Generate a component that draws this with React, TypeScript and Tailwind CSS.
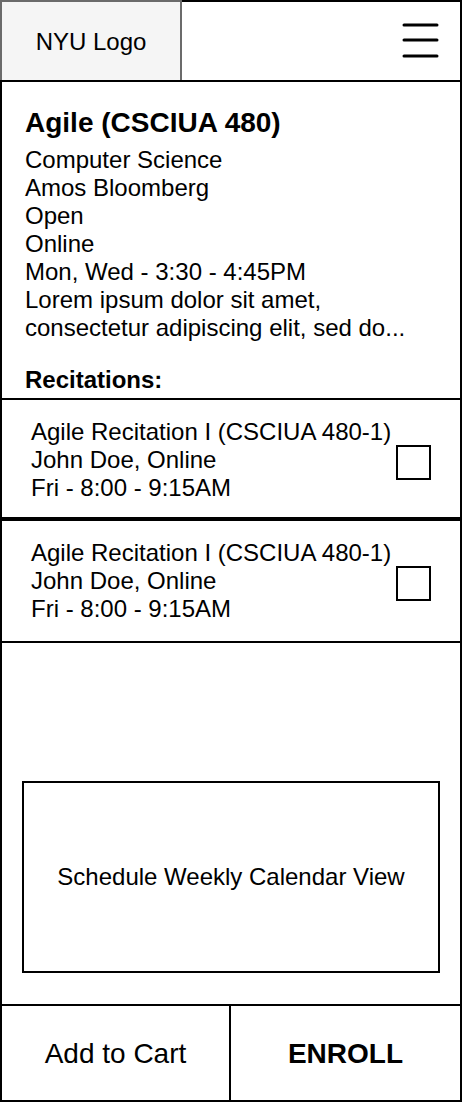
const recitations = [
  { title: 'Agile Recitation I (CSCIUA 480-1)', who: 'John Doe, Online', when: 'Fri - 8:00 - 9:15AM' },
  { title: 'Agile Recitation I (CSCIUA 480-1)', who: 'John Doe, Online', when: 'Fri - 8:00 - 9:15AM' },
];

const details = [
  'Computer Science',
  'Amos Bloomberg',
  'Open',
  'Online',
  'Mon, Wed - 3:30 - 4:45PM',
  'Lorem ipsum dolor sit amet,',
  'consectetur adipiscing elit, sed do...',
];

export default function App() {
  return (
    <div className="w-[462px] h-[1102px] flex flex-col bg-white text-black font-['Liberation_Sans',Arial,sans-serif]">
      {/* header */}
      <header className="flex h-[82px] shrink-0 border-b-2 border-black">
        <div className="w-[182px] border-2 border-b-0 border-[#6b6b6b] bg-[#f5f5f5] flex items-center justify-center text-[24px] pt-[2px]">
          NYU Logo
        </div>
        <div className="flex-1 border-t-2 border-r-2 border-black flex items-start justify-end pt-[20px] pr-[21px]">
          <svg width="37" height="38" viewBox="0 0 37 38" fill="none" stroke="#000" strokeWidth="3" strokeLinecap="round">
            <line x1="2" y1="3" x2="35" y2="3" />
            <line x1="2" y1="18" x2="35" y2="18" />
            <line x1="2" y1="34" x2="35" y2="34" />
          </svg>
        </div>
      </header>

      <main className="flex-1 flex flex-col border-x-2 border-b-2 border-black">
        {/* course info */}
        <section className="border-b-2 border-black pl-[23px] pt-[25px] pb-[4px]">
          <h1 className="text-[28px] leading-[32px] font-bold">Agile (CSCIUA 480)</h1>
          <div className="mt-[7px] text-[24px] leading-[28px]">
            {details.map((d) => (
              <p key={d}>{d}</p>
            ))}
          </div>
          <h2 className="mt-[24px] text-[24px] leading-[28px] font-bold">Recitations:</h2>
        </section>

        {/* recitations */}
        {recitations.map((r, i) => (
          <div
            key={i}
            className={`flex items-center justify-between pl-[29px] pr-[29px] border-b-2 border-black ${i > 0 ? 'border-t-2 pt-[18px] pb-[18px]' : 'pt-[18px] pb-[15px]'}`}
          >
            <div className="text-[24px] leading-[28px]">
              <p>{r.title}</p>
              <p>{r.who}</p>
              <p>{r.when}</p>
            </div>
            <div className="w-[35px] h-[35px] mt-[4px] border-2 border-black shrink-0" />
          </div>
        ))}

        {/* calendar */}
        <section className="flex-1 px-[20px] pt-[138px]">
          <div className="h-[192px] border-2 border-black flex items-center justify-center text-[24px]">
            Schedule Weekly Calendar View
          </div>
        </section>

        {/* actions */}
        <footer className="flex h-[96px] border-t-2 border-black text-[28px]">
          <button className="w-[229px] border-r-2 border-black flex items-center justify-center pt-[2px]">Add to Cart</button>
          <button className="flex-1 flex items-center justify-center font-bold pt-[2px]">ENROLL</button>
        </footer>
      </main>
    </div>
  );
}
